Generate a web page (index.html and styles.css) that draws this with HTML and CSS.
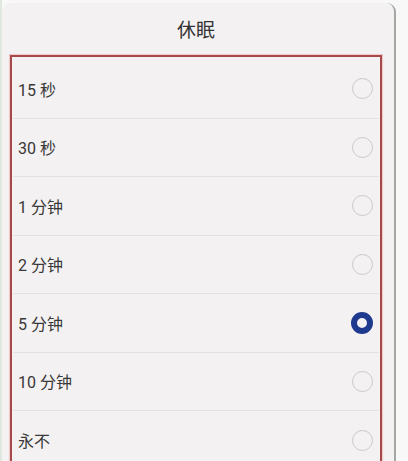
FILE: index.html
```html
<!DOCTYPE html>
<html lang="zh-CN">
<head>
  <meta charset="UTF-8">
  <title>休眠</title>
  <link rel="stylesheet" href="styles.css">
</head>
<body>
  <div class="screen">
    <div class="dialog">
      <div class="title">休眠</div>
      <div class="mark">
        <div class="row"><span>15 秒</span><span class="radio"></span></div>
        <div class="row"><span>30 秒</span><span class="radio"></span></div>
        <div class="row"><span>1 分钟</span><span class="radio"></span></div>
        <div class="row"><span>2 分钟</span><span class="radio"></span></div>
        <div class="row"><span>5 分钟</span><span class="radio checked"></span></div>
        <div class="row"><span>10 分钟</span><span class="radio"></span></div>
        <div class="row"><span>永不</span><span class="radio"></span></div>
      </div>
    </div>
  </div>
</body>
</html>
```

FILE: styles.css
```css
html, body {
  margin: 0;
  height: 100%;
  overflow: hidden;
}
body {
  background-color: #f7f8f7;
  font-family: Roboto, "Noto Sans CJK SC", sans-serif;
  color: #383838;
}
.screen {
  height: 100%;
  padding: 3px 12px 0 2px;
  box-sizing: border-box;
  background: linear-gradient(to right, #dfe7df 0, #dfe7df 2px, #f7f8f7 2px);
}
.dialog {
  height: 100%;
  background-color: #f4f1f2;
  border-radius: 9px 9px 0 0;
  border-right: 2px solid #a3a8a3;
  box-sizing: border-box;
  padding: 0 12px 0 8px;
  overflow: hidden;
}
.title {
  height: 51px;
  display: flex;
  align-items: center;
  justify-content: center;
  font-size: 19px;
  color: #333;
  padding-bottom: 1px;
}
.mark {
  border: 2px solid #a9484b;
  border-bottom: none;
  height: 500px;
  padding: 3px 1px 0 1px;
  box-shadow: 0 0 1px 1px #f0cccc;
}
.row {
  height: 58.5px;
  box-sizing: border-box;
  display: flex;
  align-items: center;
  justify-content: space-between;
  padding: 0 6px 0 5px;
  border-bottom: 1px solid #e3e1e2;
  font-size: 16px;
}
.row:last-child {
  border-bottom: none;
}
.radio {
  width: 21px;
  height: 21px;
  border: 1.5px solid #c9c9c9;
  border-radius: 50%;
  box-sizing: border-box;
}
.radio.checked {
  width: 22px;
  height: 22px;
  border: 6px solid #1d3a8e;
}
```
